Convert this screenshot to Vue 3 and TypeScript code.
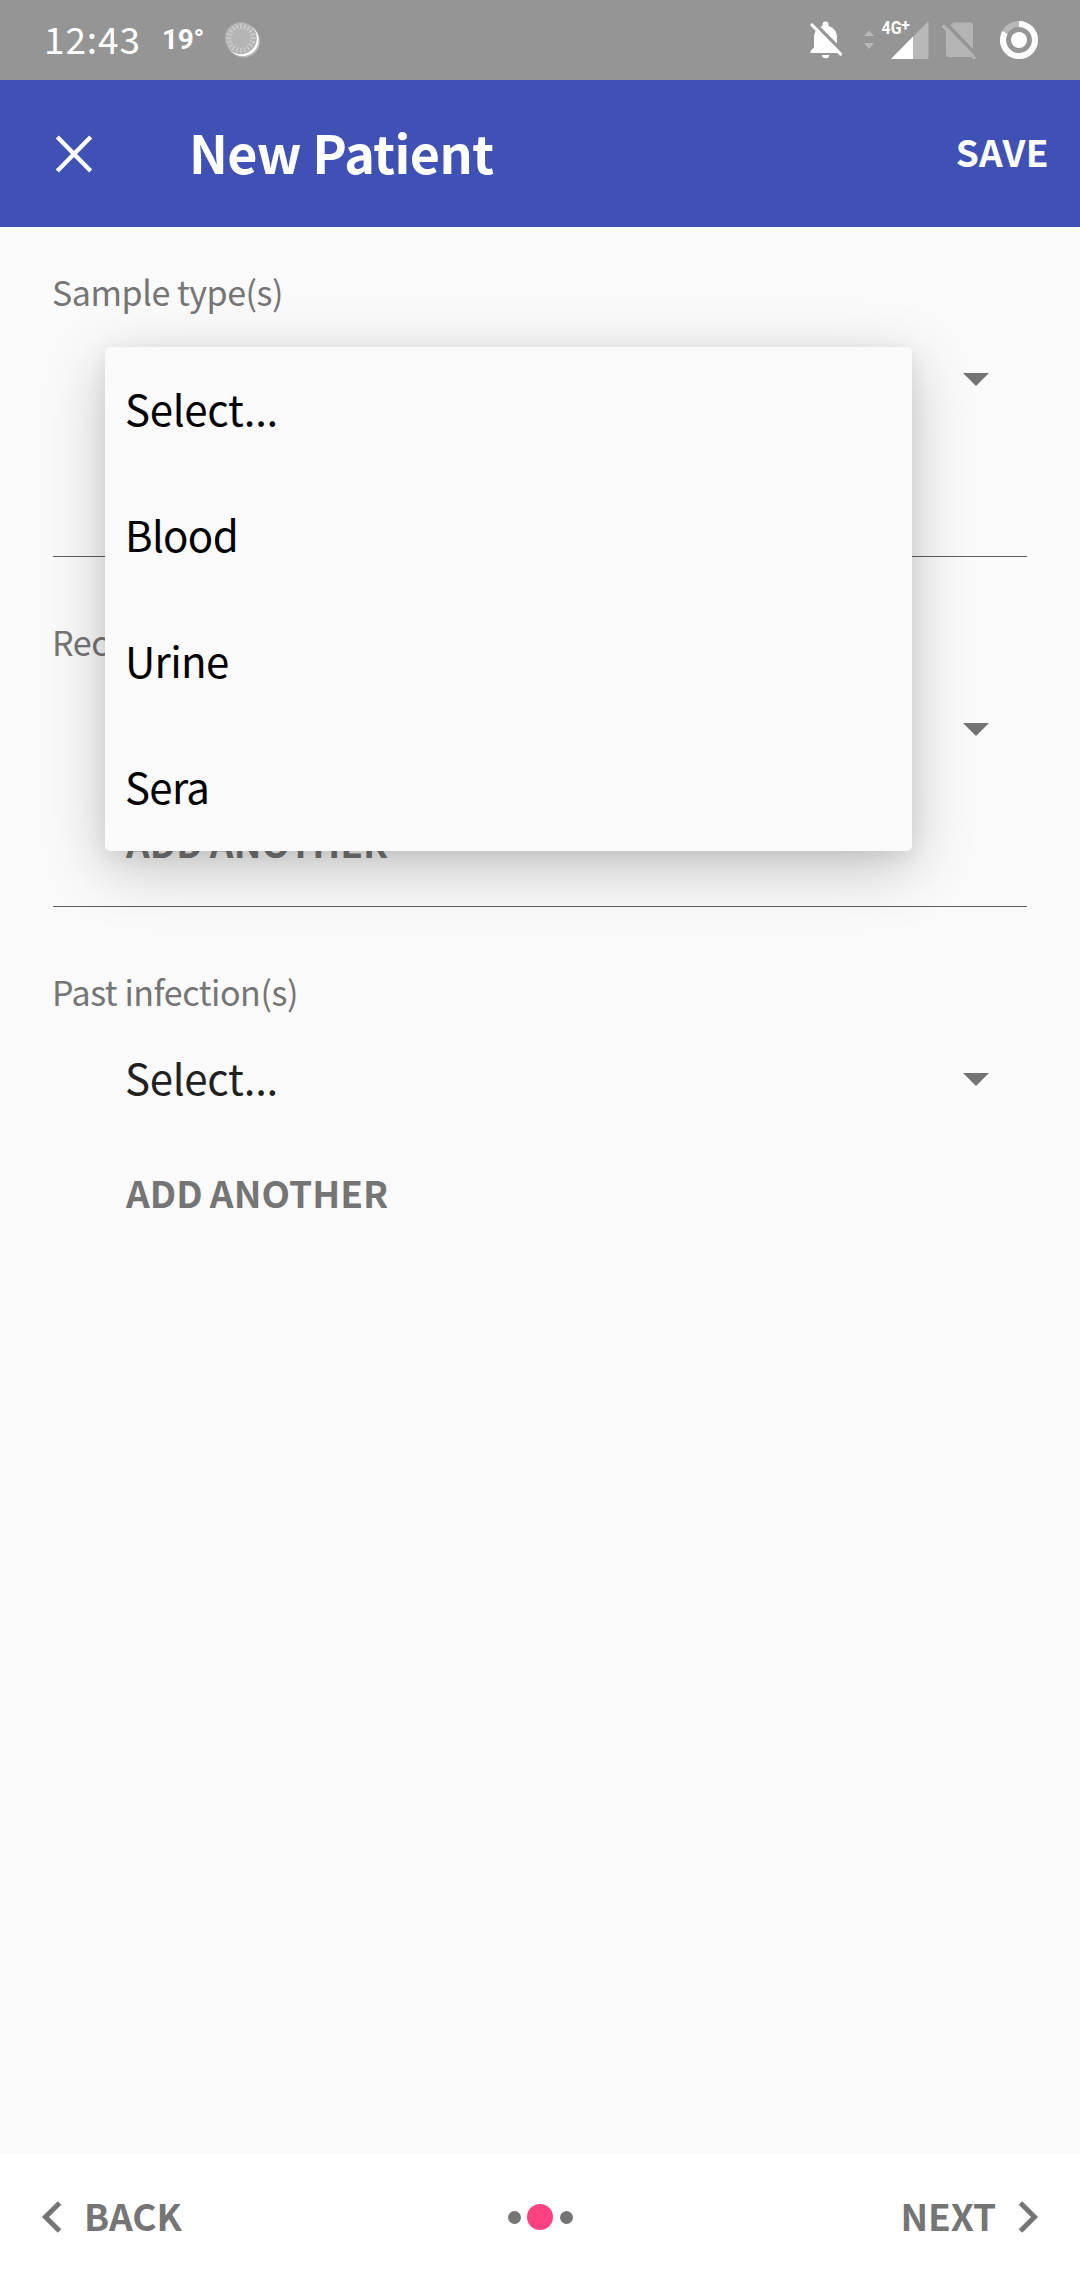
<script setup lang="ts">
interface Section {
  label: string
  value: string
}

const sections: Section[] = [
  { label: 'Sample type(s)', value: 'Select...' },
  { label: 'Recent infection(s)', value: 'Select...' },
  { label: 'Past infection(s)', value: 'Select...' },
]

const options: string[] = ['Select...', 'Blood', 'Urine', 'Sera']

const moonTicks: number[] = Array.from({ length: 20 }, (_, i) => i * 18)
</script>

<template>
  <div class="screen">
    <header class="status">
      <span class="clock">12:43</span>
      <span class="temp">19°</span>
      <svg class="moon" width="40" height="40" viewBox="221 20 40 40">
        <circle cx="243.5" cy="41" r="16.500" fill="#fff" opacity=".35" />
        <circle cx="242.6" cy="39.9" r="16" fill="#fff" />
        <circle cx="240.9" cy="38.2" r="16" fill="#b4b4b4" />
        <line
          v-for="a in moonTicks"
          :key="a"
          x1="240.9"
          y1="23.5"
          x2="240.9"
          y2="28.5"
          stroke="#cbcbcb"
          stroke-width="1.6"
          :transform="`rotate(${a} 240.9 38.2)`"
        />
      </svg>
      <div class="indicators">
        <svg width="36" height="40" viewBox="809 20 36 40">
          <path d="M810.5 53V51L814 47.500V37.500C814 31.500 817.500 27.500 822.500 26V24.500A3 3 0 0 1 828.500 24.500V26C833.500 27.500 837 31.500 837 37.500V47.500L841.500 53Z" fill="#fff" />
          <path d="M822 55H829.200A3.600 3.200 0 0 1 822 55Z" fill="#fff" />
          <path d="M812 21L845 54" stroke="#959595" stroke-width="3.500" />
          <path d="M812 25L840.500 54" stroke="#fff" stroke-width="3.200" stroke-linecap="round" />
        </svg>
        <svg class="data" width="12" height="40" viewBox="863 20 12 40">
          <path d="M864 36L869 30.500L874 36ZM864 43L869 49L874 43Z" fill="#b8b8b8" />
        </svg>
        <svg class="signal" width="50" height="40" viewBox="881 20 50 40">
          <path d="M891 59L928.500 21V59Z" fill="#b8b8b8" />
          <path d="M891 59L913 36.500V59Z" fill="#fff" />
          <text x="881.500" y="34" textLength="20" lengthAdjust="spacingAndGlyphs">4G</text>
          <path d="M901.500 25H909.500M905.500 21V29.500" stroke="#fff" stroke-width="2.200" />
        </svg>
        <svg class="sim" width="36" height="40" viewBox="941 20 36 40">
          <path d="M953.500 22.500H970A3 3 0 0 1 973 25.500V54A3 3 0 0 1 970 57H949A3 3 0 0 1 946 54V30Z" fill="#b4b4b4" />
          <path d="M944 21.500L978 56.500" stroke="#959595" stroke-width="3.500" />
          <path d="M943.800 26.500L974 57.500" stroke="#b4b4b4" stroke-width="3.400" stroke-linecap="round" />
        </svg>
        <svg class="battery" width="40" height="40" viewBox="999 20 40 40">
          <circle cx="1019" cy="40" r="16" fill="none" stroke="#b8b8b8" stroke-width="6" />
          <circle cx="1019" cy="40" r="16" fill="none" stroke="#fff" stroke-width="6" pathLength="360" stroke-dasharray="298 62" transform="rotate(-90 1019 40)" />
          <circle cx="1019" cy="40" r="8" fill="#fff" />
        </svg>
      </div>
    </header>

    <nav class="appbar">
      <svg width="38" height="38" viewBox="0 0 38 38">
        <path d="M2.300 2L35.700 36M35.700 2L2.300 36" stroke="#fff" stroke-width="4.300" />
      </svg>
      <h1>New Patient</h1>
      <button class="save">SAVE</button>
    </nav>

    <main class="form">
      <section v-for="s in sections" :key="s.label" class="section">
        <div class="label">{{ s.label }}</div>
        <div class="select">
          <span>{{ s.value }}</span>
          <svg width="26" height="13" viewBox="0 0 26 13"><path d="M0 0H26L13 13Z" fill="#747474" /></svg>
        </div>
        <button class="add">ADD ANOTHER</button>
      </section>
      <ul class="menu">
        <li v-for="o in options" :key="o">{{ o }}</li>
      </ul>
    </main>

    <footer class="pager">
      <button class="back">
        <svg width="20" height="32" viewBox="0 0 20 32"><path d="M17.500 2L3.500 16L17.500 30" fill="none" stroke="#757575" stroke-width="5" /></svg>
        <span>BACK</span>
      </button>
      <div class="dots"><i></i><i class="on"></i><i></i></div>
      <button class="next">
        <span>NEXT</span>
        <svg width="20" height="32" viewBox="0 0 20 32"><path d="M2.500 2L16.500 16L2.500 30" fill="none" stroke="#757575" stroke-width="5" /></svg>
      </button>
    </footer>
  </div>
</template>

<style>
body {
  margin: 0;
}
</style>

<style scoped>
.screen {
  width: 1080px;
  height: 2280px;
  display: flex;
  flex-direction: column;
  background: #fafafa;
  overflow: hidden;
  font-family: 'Noto Sans CJK SC', 'Noto Sans', sans-serif;
}
button {
  border: 0;
  padding: 0;
  background: none;
  font: inherit;
  font-size: 37px;
  line-height: 54px;
  font-weight: 700;
  color: #757575;
  white-space: nowrap;
}
svg {
  display: block;
  flex: none;
  overflow: visible;
}
.status {
  height: 80px;
  flex: none;
  display: flex;
  align-items: center;
  background: #959595;
  color: #fff;
}
.clock {
  width: 118px;
  margin-left: 44px;
  padding-bottom: 4px;
  font-size: 37px;
  line-height: 76px;
  letter-spacing: 0.9px;
}
.temp {
  width: 59px;
  font: 700 28px/80px Roboto, sans-serif;
  letter-spacing: -0.3px;
}
.indicators {
  margin-left: auto;
  margin-right: 41px;
  display: flex;
  align-items: center;
}
.data {
  margin-left: 18px;
}
.signal {
  margin-left: 6px;
}
.signal text {
  font: 700 18.5px Roboto, sans-serif;
  fill: #fff;
}
.sim {
  margin-left: 10px;
}
.battery {
  margin-left: 22px;
}
.appbar {
  height: 147px;
  flex: none;
  display: flex;
  align-items: center;
  background: #3f51b5;
  color: #fff;
  padding: 0 32px 0 55px;
}
h1 {
  margin: 0 0 0 96px;
  padding-bottom: 3px;
  font-size: 52px;
  font-weight: 700;
  line-height: 144px;
  letter-spacing: -0.6px;
}
.save {
  margin-left: auto;
  margin-right: -1px;
  padding-bottom: 5px;
  color: #fff;
  letter-spacing: 0.4px;
}
.form {
  flex: 1;
  position: relative;
}
.section {
  height: 350px;
  box-sizing: border-box;
  margin: 0 53px;
  padding-top: 60px;
  display: flex;
  flex-direction: column;
}
.section:first-child {
  height: 330px;
  padding-top: 40px;
}
.section:not(:nth-child(3)) {
  border-bottom: 1px solid #5f5f5f;
}
.label {
  margin-left: -1px;
  font-size: 34px;
  line-height: 50px;
  letter-spacing: -0.45px;
  color: #757575;
}
.select {
  height: 79px;
  margin: 23px 38px 0 72px;
  display: flex;
  align-items: center;
  justify-content: space-between;
  font-size: 42px;
  letter-spacing: -0.3px;
  color: #212121;
}
.select span {
  padding-bottom: 6px;
}
.add {
  margin: 46px 0 0 73px;
  align-self: flex-start;
  word-spacing: -1.5px;
  letter-spacing: 0.1px;
}
.menu {
  position: absolute;
  left: 105px;
  top: 120px;
  width: 807px;
  height: 504px;
  margin: 0;
  padding: 0;
  list-style: none;
  background: #fafafa;
  border-radius: 5px;
  box-shadow: 0 17px 62px rgba(0, 0, 0, 0.22), 0 6px 20px rgba(0, 0, 0, 0.07);
}
.menu li {
  height: 126px;
  line-height: 122px;
  padding-left: 20px;
  font-size: 42px;
  letter-spacing: -0.7px;
  color: #000;
}
.menu li:first-child {
  letter-spacing: -0.3px;
}
.pager {
  height: 126px;
  flex: none;
  display: flex;
  align-items: center;
  padding: 0 42px;
  background: #fff;
}
.back,
.next {
  flex: 1 1 0;
  display: flex;
  align-items: center;
  gap: 22px;
  letter-spacing: -0.1px;
}
.back span,
.next span {
  padding-bottom: 5px;
}
.next {
  justify-content: flex-end;
}
.dots {
  display: flex;
  align-items: center;
  gap: 6.5px;
}
.dots i {
  width: 13px;
  height: 13px;
  border-radius: 50%;
  background: #757575;
}
.dots .on {
  width: 26px;
  height: 26px;
  background: #ff4081;
}
</style>
